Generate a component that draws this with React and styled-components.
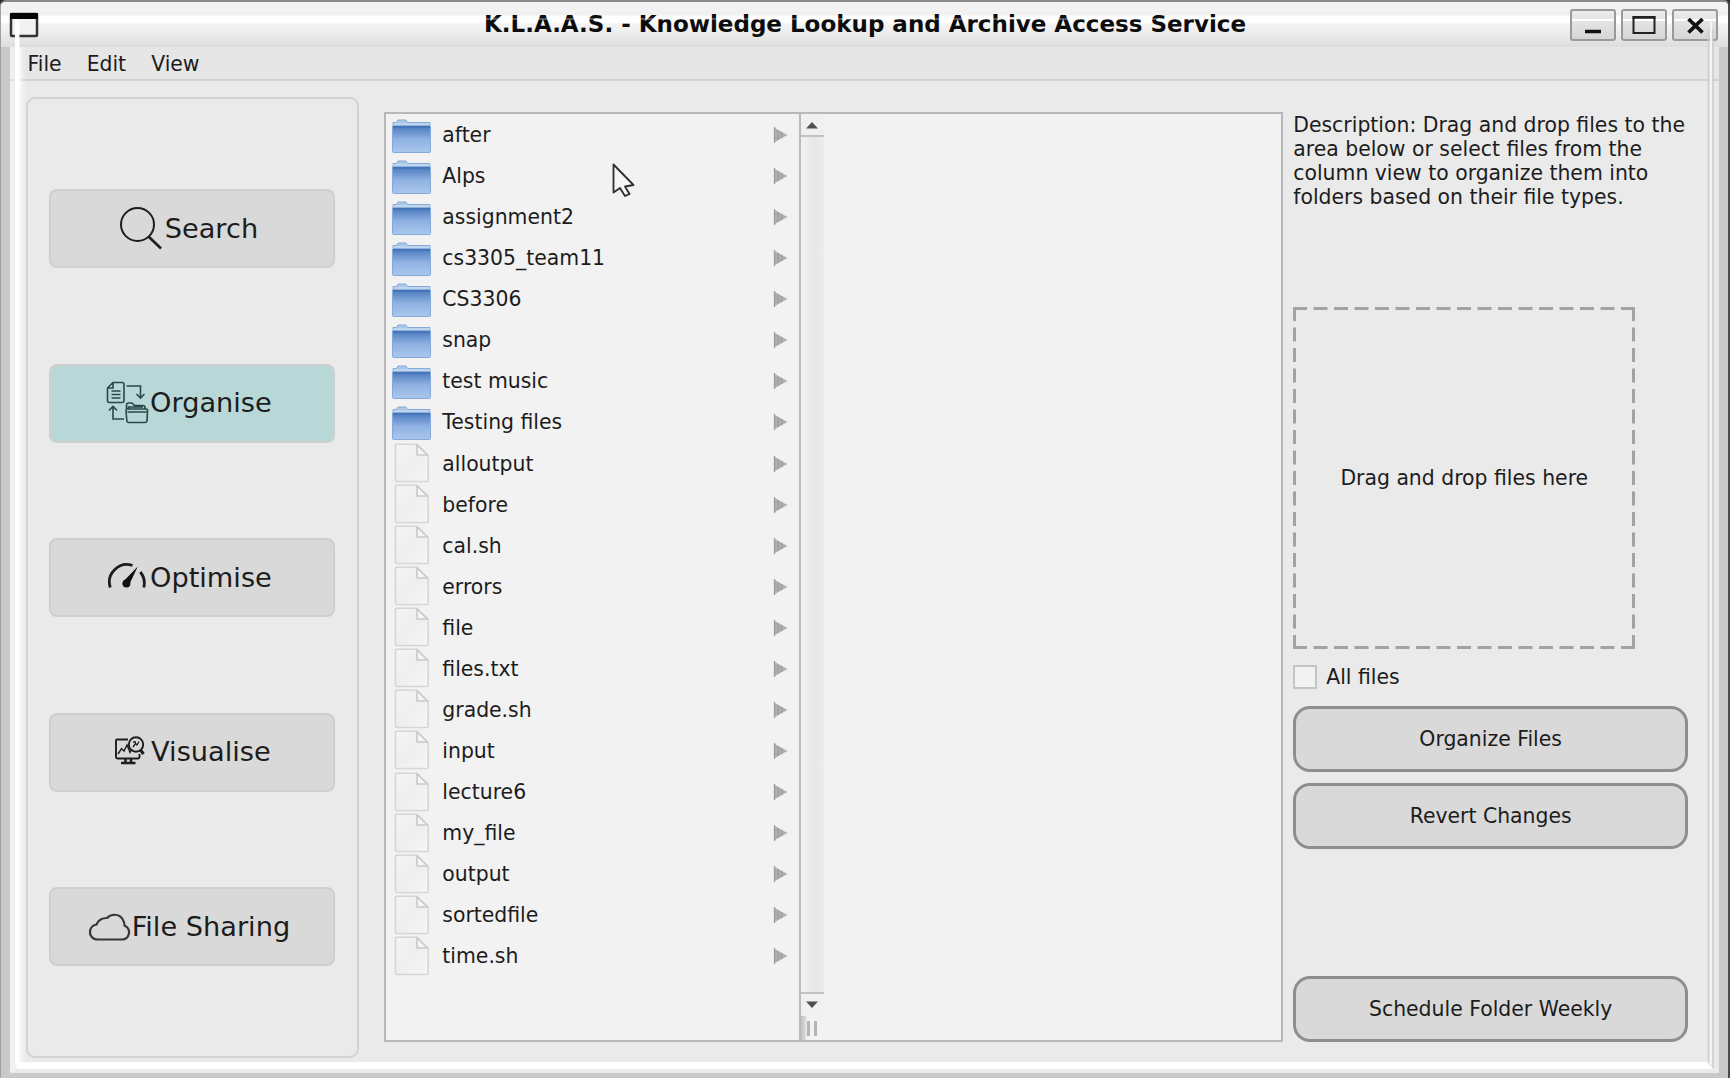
import React from "react";
import styled, { createGlobalStyle } from "styled-components";

const Global = createGlobalStyle`
  *, *::before, *::after { box-sizing: border-box; }
  html, body { margin: 0; padding: 0; overflow: hidden; background: #2c2c2c; }
  button { font: inherit; color: inherit; margin: 0; padding: 0; }
`;

const Window = styled.div`
  position: relative;
  display: flex;
  flex-direction: column;
  width: 1730px;
  height: 1078px;
  border-top: 2px solid #8c8a8c;
  border-right: 2px solid #4a4a4a;
  border-left: 1px solid #a0a0a0;
  border-radius: 6px 6px 0 0;
  background: #c9c9c9;
  color: #1c1c1c;
  font: 20.4px/24px "DejaVu Sans", sans-serif;
  overflow: hidden;
`;

const TitleBar = styled.header`
  display: flex;
  align-items: center;
  justify-content: space-between;
  flex: none;
  height: 45px;
  padding: 0 10px 0 8px;
  background: linear-gradient(#f4f4f4 0, #f0f0f0 13px, #fff 14px, #fff 20px, #f4f4f4 22px, #ececec 32px, #dcdcdc 45px);
`;

const Title = styled.h1`
  margin: 0;
  padding: 0 0 2px 121px;
  font-size: 23px;
  line-height: 28px;
  font-weight: 700;
  color: #0c0c0c;
  white-space: nowrap;
`;

const WindowIcon = styled.svg`
  display: block;
  width: 30px;
  height: 26px;
`;

const WindowButtons = styled.div`
  display: flex;
  gap: 5px;
`;

const WindowButton = styled.button`
  display: flex;
  width: 46px;
  height: 32px;
  border: 2px solid #9a9a9a;
  border-radius: 3px;
  background: linear-gradient(#ececec 0, #e6e6e6 8px, #fff 8px, #fff 10px, #e4e4e4 10px, #d6d6d6 100%);
`;

const Frame = styled.div`
  display: flex;
  flex-direction: column;
  flex: 1;
  margin: 0 9px 5px 9px;
  background: #eaeaea;
  min-height: 0;
`;

const MenuBar = styled.nav`
  display: flex;
  flex: none;
  gap: 25px;
  height: 34px;
  padding: 5px 17.5px 0;
  border-bottom: 2px solid #d2d2d2;
  background: #e6e6e6;
`;

const Body = styled.main`
  display: flex;
  flex: 1;
  min-height: 0;
  padding: 16px 31px 15px 16px;
`;

const Sidebar = styled.aside`
  display: flex;
  flex-direction: column;
  justify-content: space-between;
  width: 333px;
  height: 961px;
  padding: 90px 22px 90px 21px;
  border: 2px solid #d3d3d3;
  border-radius: 9px;
`;

const NavButton = styled.button`
  display: flex;
  align-items: center;
  justify-content: center;
  gap: ${(p) => p.$gap || 0}px;
  height: 79px;
  padding-right: 6px;
  border: 2px solid #cfcfcf;
  border-radius: 8px;
  background: ${(p) => (p.$active ? "#b8d8d8" : "#d9d9d9")};
  font-size: 27.2px;
  line-height: 32px;
`;

const NavIcon = styled.svg`
  display: block;
  flex: none;
  width: 44px;
  height: 44px;
  fill: none;
  stroke: ${(p) => p.$color || "#1d1d1d"};
  stroke-width: ${(p) => p.$stroke || 2};
`;

const ColumnView = styled.section`
  display: flex;
  width: 900px;
  height: 930px;
  margin: 15px 0 0 25px;
  border: 2px solid #b8b8b8;
  background: #f2f2f2;
`;

const FileList = styled.ul`
  width: 415px;
  margin: 0;
  padding: 0.5px 0 0;
  list-style: none;
  border-right: 2px solid #b9b9b9;
`;

const FileRow = styled.li`
  display: flex;
  align-items: center;
  height: 41.07px;
  padding: 0 11px 0 5px;
`;

const FileIcon = styled.svg`
  flex: none;
  width: 41px;
  height: 41px;
`;

const FileName = styled.span`
  flex: 1;
  padding-left: 10.5px;
`;

const Arrow = styled.svg`
  width: 15px;
  height: 18px;
`;

const ScrollColumn = styled.div`
  display: flex;
  flex-direction: column;
  width: 23px;
`;

const ScrollButton = styled.div`
  display: flex;
  align-items: center;
  justify-content: center;
  height: ${(p) => (p.$down ? 24 : 23)}px;
  padding-right: 1px;
  border: 0 solid #c2c2c2;
  border-width: ${(p) => (p.$down ? "2px 0 0" : "0 0 2px")};
  background: #f0f0f0;
`;

const Track = styled.div`
  flex: 1;
  background: linear-gradient(90deg, #f2f2f2, #e6e6e6 60%, #ededed);
`;

const Grip = styled.div`
  display: flex;
  gap: 4px;
  height: 24px;
  padding: 5px 0 4px 6px;
  background: linear-gradient(90deg, #c2c2c2, #d6d6d6 4px, #f2f2f2 6px);
`;

const GripLine = styled.span`
  width: 3px;
  background: #b4b4b4;
`;

const Actions = styled.section`
  display: flex;
  flex-direction: column;
  width: 395px;
  margin: 16px 0 0 10px;
`;

const Description = styled.p`
  height: 194px;
  margin: 0;
  white-space: pre;
`;

const DropZone = styled.div`
  display: flex;
  align-items: center;
  justify-content: center;
  position: relative;
  width: 342px;
  height: 342px;
`;

const DropOutline = styled.svg`
  position: absolute;
  inset: 0;
`;

const CheckRow = styled.label`
  display: flex;
  align-items: center;
  gap: 9px;
  height: 24px;
  margin: 16px 0 17px;
`;

const CheckBox = styled.span`
  width: 24px;
  height: 24px;
  border: 2px solid #c4c4c4;
  background: #f2f2f2;
`;

const ActionButton = styled.button`
  height: 66px;
  margin-bottom: ${(p) => p.$after || 0}px;
  border: 3px solid #8e8e8e;
  border-radius: 17px;
  background: #d9d9d9;
`;

const EdgeOverlay = styled.svg`
  position: absolute;
  left: -1px;
  top: -2px;
  pointer-events: none;
`;

const Pointer = styled.svg`
  position: absolute;
  left: 610px;
  top: 160px;
  width: 26px;
  height: 36px;
`;

const folders = ["after", "Alps", "assignment2", "cs3305_team11", "CS3306", "snap", "test music", "Testing files"];
const files = ["alloutput", "before", "cal.sh", "errors", "file", "files.txt", "grade.sh", "input", "lecture6", "my_file", "output", "sortedfile", "time.sh"];

const FolderIcon = () => (
  <FileIcon viewBox="0 0 41 41">
    <path d="M2 12 V7.500 H5.500 L7 5 H15 L16.500 7.500 H39 V12 Z" fill="#a9c8ea" stroke="#86abdb" strokeLinejoin="round" />
    <rect x="2.500" y="8" width="36" height="3" fill="#bdd6ee" />
    <rect x="1.500" y="11" width="38" height="26.500" rx="1" fill="url(#folderFace)" stroke="#86a9dc" />
    <rect x="2" y="10.800" width="37" height="2" fill="#4674b8" />
  </FileIcon>
);

const PageIcon = () => (
  <FileIcon viewBox="0 0 41 41">
    <path d="M5 1.300 H26 L37.200 12.500 V37.500 Q37.200 38.500 36 38.500 H6 Q4.500 38.500 4.500 37.500 V2 Z" fill="url(#pageFace)" stroke="#d6d6d6" strokeWidth="1.600" strokeLinejoin="round" />
    <path d="M26 2 V12 H36.500 Z" fill="#f6f6f6" stroke="#c9c9c9" strokeWidth="1.600" strokeLinejoin="round" />
  </FileIcon>
);

const Row = ({ name, folder }) => (
  <FileRow>
    {folder ? <FolderIcon /> : <PageIcon />}
    <FileName>{name}</FileName>
    <Arrow viewBox="0 0 15 18">
      <path d="M1 1.500 L14.500 9 L1 16.500 Z" fill="#b0b0b0" />
      <path d="M1.500 1 V17 M5 4 V14 M8.500 6 V12" stroke="#9c9c9c" strokeWidth="1.300" />
    </Arrow>
  </FileRow>
);

const SearchIcon = () => (
  <NavIcon viewBox="0 0 44 44" $stroke="2">
    <circle cx="17.500" cy="17.500" r="16.500" />
    <path d="M28.500 29.500 L41 41.500" strokeWidth="2.600" />
  </NavIcon>
);

const OrganiseIcon = () => (
  <NavIcon viewBox="0 0 44 44" $stroke="1.6" $color="#26484a">
    <path d="M7 1.500 H16 Q18 1.500 18 3.500 V19.500 Q18 21.500 16 21.500 H3.500 Q1.500 21.500 1.500 19.500 V7 Z M7 1.500 V7 H1.500 M5.500 10 H14.500 M5.500 13.500 H14.500 M5.500 17 H14.500" />
    <path d="M20.500 5 H34.500 V16.500 M30.500 13 L34.500 17 L38.500 13 M18 38 H7 V25.500 M3 29.500 L7 25.500 L11 29.500" />
    <path d="M20.500 27.500 V24 Q20.500 22 22.500 22 H26 L28.500 24.500 H37 Q39 24.500 39 26.500 V27.500 M22.500 27.500 V26 H37 M21 28 H40 Q41.800 28 41.500 29.500 L41 39.500 Q40.800 41.500 39 41.500 H23 Q21 41.500 20.800 39.500 L20 29.500 Q20 28 21 28 M21.500 31 H40.500" />
  </NavIcon>
);

const GaugeIcon = () => (
  <NavIcon viewBox="0 0 44 44" $stroke="2.8">
    <path d="M4.300 31.500 A17.500 17.500 0 0 1 26.500 9.500 M34.300 16 A18 18 0 0 1 37.800 31.500" />
    <path d="M31.800 10.500 L23.500 28 A3.500 3.500 0 1 1 18.500 24.300 Z" fill="#111" stroke="none" />
    <circle cx="20.500" cy="27.500" r="3.900" fill="#111" stroke="none" />
  </NavIcon>
);

const VisualiseIcon = () => (
  <NavIcon viewBox="0 0 44 44" $stroke="1.9">
    <path d="M21 9.500 H10 Q9 9.500 9 10.500 V27 Q9 28.500 10.500 28.500 H31 Q32.500 28.500 32.500 27 V24" />
    <path d="M11 24 L14.500 18.500 L17 21 L20 15 L23 22.500 L25 19" strokeWidth="1.400" />
    <circle cx="29" cy="14.500" r="7.200" />
    <path d="M33.500 20 L36.500 24" strokeWidth="3" />
    <path d="M26 17 L28.500 13.500 L30 15 L32 11.500 M26 12 H29" strokeWidth="1.300" />
    <path d="M18.500 29 V32.500 M24 29 V32.500 M14 33 H28.500" strokeWidth="2.500" />
  </NavIcon>
);

const CloudIcon = () => (
  <NavIcon viewBox="0 0 44 44" $stroke="2.2" $color="#393536">
    <path d="M10 34.500 C4.500 34.500 1.500 30.500 2 26 C2.500 22.500 5.500 20 8.500 19.500 C10.500 14.500 14.500 13 19 13 C23 8.500 31 8.500 34.500 14 C36 16.500 36.500 19 36.500 20.500 C39.500 22 41.500 25 41 28.500 C40 32.500 37 34.500 34 34.500 Z" />
  </NavIcon>
);

export default function App() {
  return (
    <>
      <Global />
      <Window>
        <TitleBar>
          <WindowIcon viewBox="0 0 30 26">
            <rect x="2" y="2" width="26" height="22" rx="1" fill="#f2f2f2" stroke="#333" strokeWidth="2.500" />
            <rect x="1" y="1" width="28" height="6" fill="#050505" />
          </WindowIcon>
          <Title>K.L.A.A.S. - Knowledge Lookup and Archive Access Service</Title>
          <WindowButtons>
            <WindowButton aria-label="Minimise">
              <svg width="42" height="28"><path d="M13 20.500 H29" stroke="#111" strokeWidth="3.500" /></svg>
            </WindowButton>
            <WindowButton aria-label="Maximise">
              <svg width="42" height="28"><path d="M10.500 6 H31.500 V22 H10.500 Z" fill="none" stroke="#222" strokeWidth="2" /><path d="M9.500 6.500 H32.500" stroke="#222" strokeWidth="2.500" /></svg>
            </WindowButton>
            <WindowButton aria-label="Close">
              <svg width="42" height="28"><path d="M14.500 8 L28.500 21.500 M28.500 8 L14.500 21.500" stroke="#111" strokeWidth="3.800" /></svg>
            </WindowButton>
          </WindowButtons>
        </TitleBar>
        <Frame>
          <MenuBar>
            <span>File</span>
            <span>Edit</span>
            <span>View</span>
          </MenuBar>
          <Body>
            <Sidebar>
              <NavButton $gap={1}><SearchIcon />Search</NavButton>
              <NavButton $active><OrganiseIcon />Organise</NavButton>
              <NavButton><GaugeIcon />Optimise</NavButton>
              <NavButton><VisualiseIcon />Visualise</NavButton>
              <NavButton><CloudIcon />File Sharing</NavButton>
            </Sidebar>
            <ColumnView>
              <FileList>
                {folders.map((n) => <Row key={n} name={n} folder />)}
                {files.map((n) => <Row key={n} name={n} />)}
              </FileList>
              <ScrollColumn>
                <ScrollButton><svg width="14" height="8"><path d="M1 7.500 L7 1 L13 7.500 Z" fill="#505050" /></svg></ScrollButton>
                <Track />
                <ScrollButton $down><svg width="14" height="8"><path d="M1 .500 L7 7 L13 .500 Z" fill="#505050" /></svg></ScrollButton>
                <Grip><GripLine /><GripLine /></Grip>
              </ScrollColumn>
            </ColumnView>
            <Actions>
              <Description>{"Description: Drag and drop files to the\narea below or select files from the\ncolumn view to organize them into\nfolders based on their file types."}</Description>
              <DropZone>
                <DropOutline width="342" height="342">
                  <path
                    d="M0 1.500 H342 M0 340.500 H342 M1.500 0 V342 M340.500 0 V342"
                    fill="none"
                    stroke="#a2a2a2"
                    strokeWidth="3"
                    strokeDasharray="14 6.500"
                  />
                </DropOutline>
                Drag and drop files here
              </DropZone>
              <CheckRow><CheckBox />All files</CheckRow>
              <ActionButton $after={11}>Organize Files</ActionButton>
              <ActionButton $after={127}>Revert Changes</ActionButton>
              <ActionButton>Schedule Folder Weekly</ActionButton>
            </Actions>
          </Body>
        </Frame>
        <EdgeOverlay width="1730" height="1078">
          <defs>
            <linearGradient id="folderFace" x1="0" y1="0" x2="0" y2="1">
              <stop offset="0" stopColor="#4a7abf" />
              <stop offset=".5" stopColor="#8fb2e2" />
              <stop offset="1" stopColor="#aac6ec" />
            </linearGradient>
            <linearGradient id="pageFace" x1="0" y1="0" x2="1" y2="1">
              <stop offset="0" stopColor="#f5f5f5" />
              <stop offset=".5" stopColor="#eeeeee" />
              <stop offset="1" stopColor="#f6f6f6" />
            </linearGradient>
            <linearGradient id="edgeGlow">
              <stop offset="0" stopColor="#fff" stopOpacity=".7" />
              <stop offset="1" stopColor="#fff" stopOpacity="0" />
            </linearGradient>
          </defs>
          <rect x="19" y="47" width="7" height="1015" fill="url(#edgeGlow)" />
          <rect x="10" y="47" width="5" height="1025" fill="#fff" opacity=".35" />
          <path d="M17.200 20 V1065.500" stroke="#fff" strokeWidth="4.500" />
          <path d="M15 1069 L20 1062 H1706 L1713 1069 Z" fill="#fff" />
          <path d="M484 19 H1246" stroke="#fff" strokeWidth="2" opacity=".3" />
          <path d="M1708.500 30 V1062 M1713 30 V1068" stroke="#cdcdcd" strokeWidth="1.500" />
          <path d="M1711 20 V1064" stroke="#f4f4f4" strokeWidth="2" />
        </EdgeOverlay>
        <Pointer viewBox="0 0 26 36">
          <path d="M2.500 2.500 V30.500 L9 26 L14 34 L18.500 32 L14 24.500 L22.500 23 Z" fill="#f5f5f5" stroke="#2c2c34" strokeWidth="1.800" strokeLinejoin="round" />
        </Pointer>
      </Window>
    </>
  );
}
